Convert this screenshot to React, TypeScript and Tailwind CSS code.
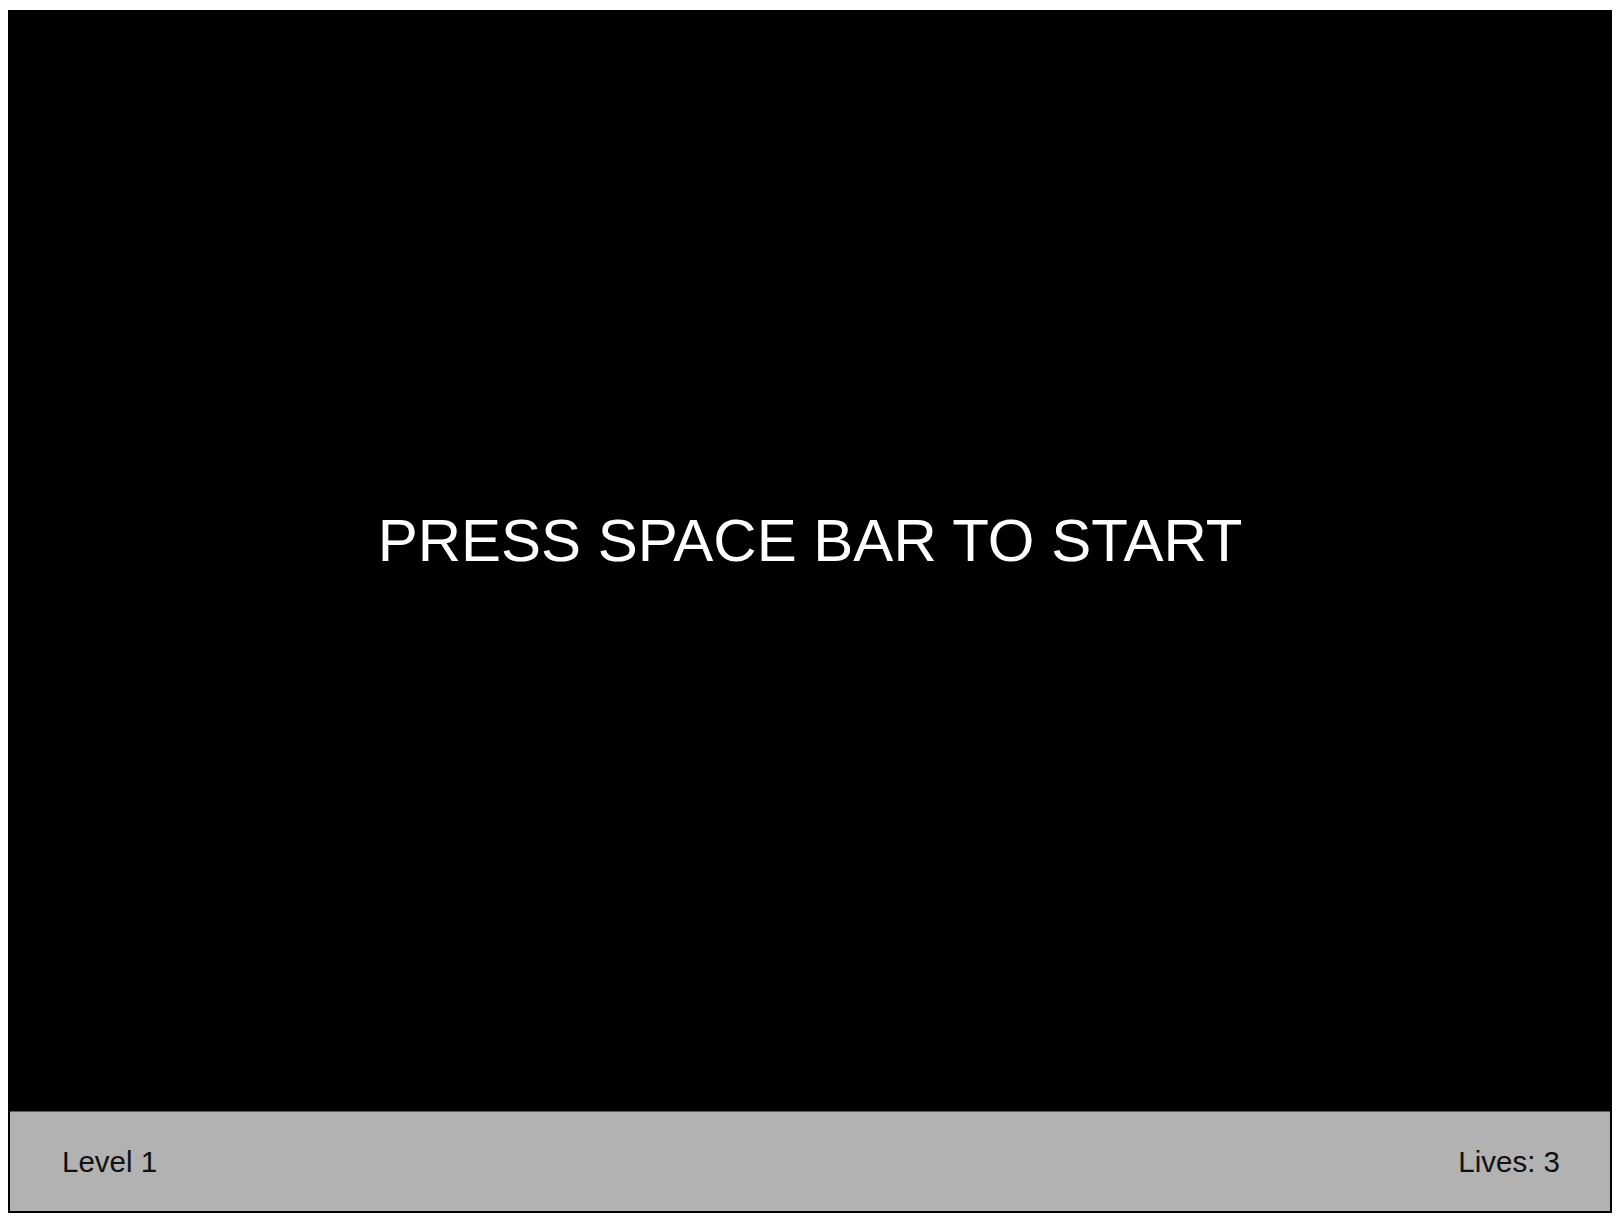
export default function App() {
  return (
    <div className="min-h-screen bg-white pl-2 pt-[10px] font-['Liberation_Sans',Arial,sans-serif]">
      <div className="w-[1604px] border-2 border-black">
        {/* game canvas */}
        <div className="h-[1099px] bg-black flex items-center justify-center pb-[41px]">
          <span className="text-white text-[60px] leading-none">PRESS SPACE BAR TO START</span>
        </div>
        {/* status bar */}
        <div className="h-[100px] bg-[#b2b2b2] border-t border-[#5a5a5a] flex items-center justify-between pl-[52px] pr-[50px]">
          <span className="text-[29.5px] leading-none text-[#111]">Level 1</span>
          <span className="text-[29.5px] leading-none text-[#111]">Lives: 3</span>
        </div>
      </div>
    </div>
  );
}
